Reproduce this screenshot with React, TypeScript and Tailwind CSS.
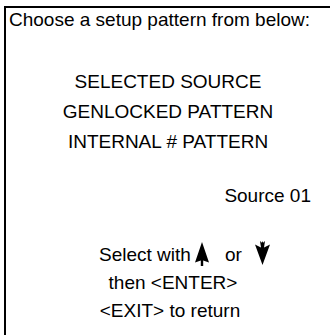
import React from "react";

function UpArrow() {
  return (
    <svg width="14" height="24" viewBox="0 0 14 24" className="block">
      <polygon points="7,0 14,20.5 8.2,18.5 8.2,24 5.8,24 5.8,18.5 0,20.5" fill="#000" />
    </svg>
  );
}

function DownArrow() {
  return (
    <svg width="15" height="24" viewBox="0 0 15 24" className="block">
      <polygon points="7.5,24 15,3.5 9,6.5 10,0 8.1,1.8 7.5,0 6.9,1.8 5,0 6,6.5 0,3.5" fill="#000" />
    </svg>
  );
}

export default function App() {
  return (
    <div className="w-[330px] h-[335px] bg-white overflow-hidden">
      <div
        className="mt-[6px] ml-[4px] h-[329px] border-t-2 border-l-2 border-black flex flex-col text-black text-[19px]"
        style={{ fontFamily: '"Liberation Sans", Arial, sans-serif' }}
      >
        <div className="pt-[1px] pl-[3px] leading-[22px] whitespace-nowrap">
          Choose a setup pattern from below:
        </div>
        <div className="mt-[36px] flex flex-col items-center leading-[30px]">
          <div>SELECTED SOURCE</div>
          <div>GENLOCKED PATTERN</div>
          <div>INTERNAL # PATTERN</div>
        </div>
        <div className="mt-[24px] leading-[30px] text-right pr-[19px]">Source 01</div>
        <div className="mt-[30px] flex flex-col leading-[28px]">
          <div className="flex items-center pl-[93px] h-[28px]">
            <span>Select with</span>
            <span className="ml-[4px] -mt-[2px]"><UpArrow /></span>
            <span className="ml-[16px]">or</span>
            <span className="ml-[13px] -mt-[4px]"><DownArrow /></span>
          </div>
          <div className="text-center pl-[10px]">then &lt;ENTER&gt;</div>
          <div className="text-center pl-[4px]">&lt;EXIT&gt; to return</div>
        </div>
      </div>
    </div>
  );
}
